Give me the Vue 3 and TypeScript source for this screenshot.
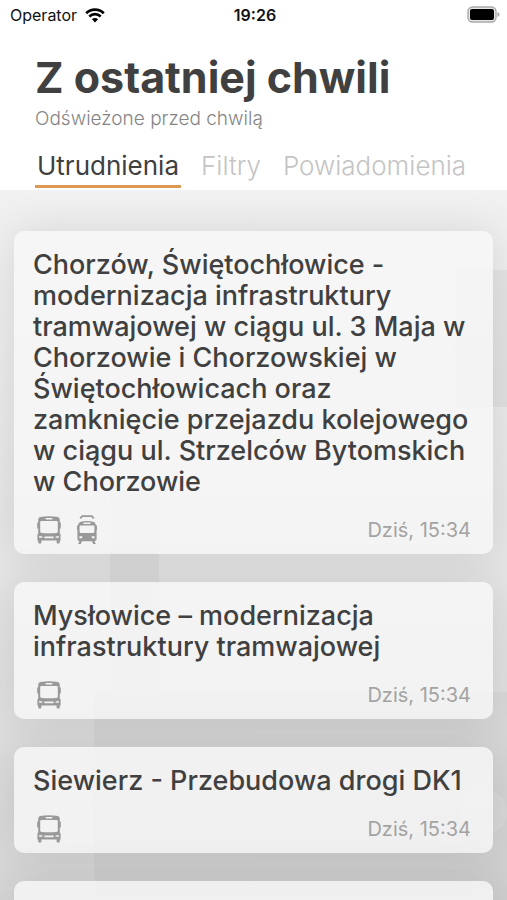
<script setup lang="ts">
import { ref } from 'vue'

type Vehicle = 'bus' | 'tram'

interface Notice {
  id: number
  title: string
  vehicles: Vehicle[]
  time: string
}

const tabs: string[] = ['Utrudnienia', 'Filtry', 'Powiadomienia']
const active = ref<string>('Utrudnienia')

const notices: Notice[] = [
  {
    id: 1,
    title:
      'Chorzów, Świętochłowice -\nmodernizacja infrastruktury\ntramwajowej w ciągu ul. 3 Maja w\nChorzowie i Chorzowskiej w\nŚwiętochłowicach oraz\nzamknięcie przejazdu kolejowego\nw ciągu ul. Strzelców Bytomskich\nw Chorzowie',
    vehicles: ['bus', 'tram'],
    time: 'Dziś, 15:34',
  },
  {
    id: 2,
    title: 'Mysłowice – modernizacja\ninfrastruktury tramwajowej',
    vehicles: ['bus'],
    time: 'Dziś, 15:34',
  },
  {
    id: 3,
    title: 'Siewierz - Przebudowa drogi DK1',
    vehicles: ['bus'],
    time: 'Dziś, 15:34',
  },
]
</script>

<template>
  <div class="screen">
    <header class="header">
      <div class="status">
        <div class="carrier">
          <span>Operator</span>
          <svg class="wifi" viewBox="0 0 20 15" aria-hidden="true">
            <path d="M1.2 5.2A12.6 12.6 0 0 1 18.8 5.2" />
            <path d="M4.3 8.5A8.1 8.1 0 0 1 15.7 8.5" />
            <path class="wifi-dot" d="M10 14.4L6.9 11.3A4.4 4.4 0 0 1 13.1 11.3Z" />
          </svg>
        </div>
        <strong class="clock">19:26</strong>
        <svg class="battery" viewBox="0 0 34 18" aria-hidden="true">
          <rect x="2" y="1" width="28" height="15" rx="4.5" fill="#e6e6e6" stroke="#a9a9a9" stroke-width="1.4" />
          <rect x="4" y="3" width="24" height="11" rx="2" fill="#000" />
          <path d="M31.5 6Q33.6 6.8 33.6 8.5Q33.6 10.2 31.5 11Z" fill="#a9a9a9" />
        </svg>
      </div>
      <h1 class="title">Z ostatniej chwili</h1>
      <p class="refreshed">Odświeżone przed chwilą</p>
      <nav class="tabs">
        <button
          v-for="tab in tabs"
          :key="tab"
          type="button"
          class="tab"
          :class="{ active: tab === active }"
          @click="active = tab"
        >
          {{ tab }}
        </button>
      </nav>
    </header>

    <main class="feed">
      <svg class="backdrop" viewBox="0 0 507 710" preserveAspectRatio="none" aria-hidden="true">
        <path d="M455 80H507V217H455Z" fill="#000" opacity=".04" />
        <path d="M110 300H159V502H110Z" fill="#000" opacity=".03" />
        <path d="M94 502H507V710H98Q94 690 94 670Z" fill="#000" opacity=".03" />
        <circle cx="484" cy="622" r="23" fill="#fff" opacity=".12" />
      </svg>
      <article v-for="notice in notices" :key="notice.id" class="card">
        <h2 class="card-title">{{ notice.title }}</h2>
        <div class="card-foot">
          <div class="vehicles">
            <template v-for="vehicle in notice.vehicles" :key="vehicle">
              <svg v-if="vehicle === 'bus'" class="vehicle" viewBox="0 0 24 30" role="img" aria-label="Autobus">
                <path
                  fill-rule="evenodd"
                  d="M3 2Q12 .4 21 2Q22.6 2.6 22.8 4.6V7.5H23.8V13.5H22.8V18.3L23.6 19.5V25.4H22.8V27.4Q22.8 28.6 21.2 28.6Q19.6 28.6 19.6 27.4V25.4H4.4V27.4Q4.4 28.6 2.8 28.6Q1.2 28.6 1.2 27.4V25.4H.4V19.5L1.2 18.3V13.5H.2V7.5H1.2V4.6Q1.4 2.6 3 2ZM8.7 3V4.6H15.3V3ZM3.2 7.2V16.6Q3.2 17.8 4.6 17.9Q12 18.4 19.4 17.9Q20.8 17.8 20.8 16.6V7.2Q20.8 6 19.6 6H4.4Q3.2 6 3.2 7.2ZM2.2 21V22.8H5.4V21.4ZM7.4 21.4V23.2H16.6V21.4ZM18.6 21.4V22.8H21.8V21Z"
                />
              </svg>
              <svg v-else class="vehicle" viewBox="0 0 24 30" role="img" aria-label="Tramwaj">
                <path
                  class="wire"
                  d="M5.2 3.4L7.2 1.2H16.8L18.8 3.4"
                />
                <path
                  fill-rule="evenodd"
                  d="M5 7Q12 5.2 19 7Q20.6 7.7 21 10.5H22V15H21.6V24Q21.6 25.8 19.6 26L20.8 29H18.2L17 26.2H7L5.8 29H3.2L4.4 26Q2.4 25.8 2.4 24V15H2V10.5H3Q3.4 7.7 5 7ZM8.5 7.5V9H15.5V7.5ZM4.6 11.3V16.8Q4.6 17.8 5.6 17.9Q12 18.3 18.4 17.9Q19.4 17.8 19.4 16.8V11.3Q19.4 10.4 18.4 10.4H5.6Q4.6 10.4 4.6 11.3ZM4.4 21.2V23.2H7.2V21.2ZM16.8 21.2V23.2H19.6V21.2Z"
                />
              </svg>
            </template>
          </div>
          <time class="time">{{ notice.time }}</time>
        </div>
      </article>
      <article class="card next"></article>
    </main>
  </div>
</template>

<style>
body {
  margin: 0;
}
</style>

<style scoped>
.screen {
  display: flex;
  flex-direction: column;
  height: 100vh;
  overflow: hidden;
  font-family: Inter, "Noto Sans", sans-serif;
  color: #404040;
}

.header {
  position: relative;
  z-index: 1;
  flex: none;
  background: #fff;
}

.status {
  display: grid;
  grid-template-columns: 1fr auto 1fr;
  align-items: center;
  height: 30px;
  padding: 0 7px 0 10px;
  color: #111;
  font-size: 16px;
}

.carrier {
  display: flex;
  align-items: center;
  gap: 8px;
}

.wifi {
  width: 20px;
  height: 15px;
  fill: none;
  stroke: #000;
  stroke-width: 2.6;
}

.wifi-dot {
  fill: #000;
  stroke: none;
}

.clock {
  font-weight: 600;
}

.battery {
  justify-self: end;
  width: 34px;
  height: 18px;
}

.title {
  margin: 22px 35px 0;
  font-size: 43px;
  line-height: 50px;
  font-weight: 700;
  white-space: nowrap;
}

.refreshed {
  margin: 5px 35px 0;
  font-size: 19px;
  line-height: 24px;
  font-weight: 300;
  color: #858585;
}

.tabs {
  display: flex;
  gap: 18px;
  margin: 15px 35px 0;
  padding-bottom: 2px;
}

.tab {
  height: 42px;
  padding: 0 2px;
  border: 0;
  border-bottom: 3px solid transparent;
  background: none;
  font-family: inherit;
  font-size: 26px;
  line-height: 34px;
  font-weight: 300;
  color: #c4c4c4;
  cursor: pointer;
}

.tab.active {
  border-color: #dc9a50;
  color: #404040;
  font-weight: 400;
}

.feed {
  position: relative;
  flex: 1;
  min-height: 0;
  display: flex;
  flex-direction: column;
  gap: 28px;
  padding: 41px 14px 0;
  overflow: hidden;
  background: linear-gradient(#f1f1f1, #e6e6e6 50%, #d6d6d6);
}

.backdrop {
  position: absolute;
  inset: 0;
  width: 100%;
  height: 100%;
}

.card {
  position: relative;
  flex: none;
  padding: 18px 22px 7px 19px;
  border-radius: 10px;
  background: rgba(247, 247, 247, 0.8);
  box-shadow: 0 0 44px rgba(0, 0, 0, 0.11);
}

.card-title {
  margin: 0;
  font-size: 27px;
  line-height: 31px;
  font-weight: 500;
  white-space: pre;
}

.card-foot {
  display: flex;
  align-items: center;
  justify-content: space-between;
  height: 34px;
  margin-top: 16px;
}

.vehicles {
  display: flex;
  gap: 14px;
  padding-left: 4px;
}

.vehicle {
  width: 24px;
  height: 30px;
  fill: #999;
}

.wire {
  fill: none;
  stroke: #999;
  stroke-width: 1.8;
}

.time {
  font-size: 20px;
  line-height: 24px;
  font-weight: 400;
  color: #a3a3a3;
}

.next {
  height: 120px;
}
</style>
